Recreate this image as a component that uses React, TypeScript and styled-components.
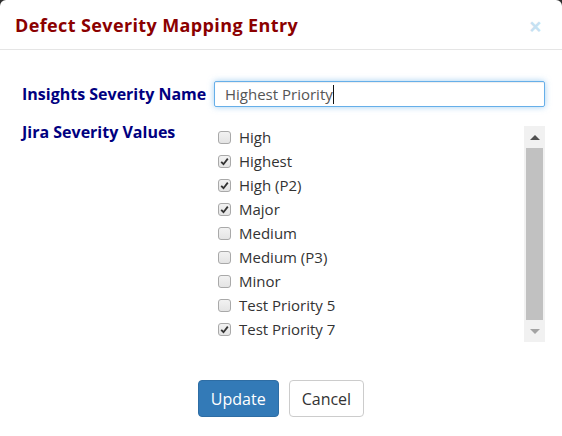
import React from "react";
import styled, { createGlobalStyle } from "styled-components";

const Global = createGlobalStyle`
  html, body { margin: 0; padding: 0; background: #2e2e2e; }
  body { font-family: "Open Sans", "Liberation Sans", sans-serif; }
  * { box-sizing: border-box; }
`;

const Dialog = styled.div`
  width: 562px;
  height: 436px;
  background: #fff;
  border-radius: 6px 6px 0 0;
  display: flex;
  flex-direction: column;
  overflow: hidden;
`;

const Header = styled.div`
  height: 50px;
  border-bottom: 1px solid #e5e5e5;
  display: flex;
  align-items: center;
  justify-content: space-between;
  padding: 0 20px 0 15px;
`;

const Title = styled.h4`
  margin: 0;
  font-size: 18px;
  font-weight: 700;
  letter-spacing: 0.38px;
  color: #8b0000;
`;

const Close = styled.button`
  border: 0;
  background: none;
  padding: 0;
  margin-top: 3px;
  font-family: "Open Sans", "Liberation Sans", sans-serif;
  font-size: 23px;
  font-weight: 700;
  line-height: 1;
  color: #c6e1f2;
  cursor: pointer;
`;

const Body = styled.div`
  display: grid;
  grid-template-columns: 192px 1fr;
  row-gap: 19px;
  padding: 31px 17px 0 22px;
  align-items: start;
`;

const Label = styled.label<{ $top?: number }>`
  font-size: 16px;
  font-weight: 700;
  color: #000080;
  line-height: 26px;
  white-space: nowrap;
  margin-top: ${(p) => p.$top ?? 0}px;
`;

const InputBox = styled.div`
  height: 26px;
  border: 1px solid #66afe9;
  border-radius: 2px;
  box-shadow: inset 0 1px 1px rgba(0, 0, 0, 0.075), 0 0 6px rgba(102, 175, 233, 0.6);
  padding: 0 10px;
  font-size: 15px;
  line-height: 24px;
  color: #555;
  display: flex;
  align-items: center;
`;

const Caret = styled.span`
  display: inline-block;
  width: 1px;
  height: 19px;
  background: #111;
`;

const ListBox = styled.div`
  display: flex;
  height: 216px;
`;

const Options = styled.div`
  flex: 1;
  display: flex;
  flex-direction: column;
  padding-left: 4px;
  margin-top: -1px;
`;

const Option = styled.label`
  display: flex;
  align-items: center;
  gap: 8px;
  height: 24px;
  font-size: 15px;
  color: #333;
`;

const Box = styled.span`
  width: 13px;
  height: 13px;
  border: 1px solid #a9a9a9;
  border-radius: 3px;
  background: linear-gradient(#f2f2f2, #e4e4e4);
  display: flex;
  align-items: center;
  justify-content: center;
  flex: none;
`;

const Scrollbar = styled.div`
  width: 21px;
  background: #f1f1f1;
  display: flex;
  flex-direction: column;
  align-items: center;
`;

const Arrow = styled.div<{ $dir: "up" | "down"; $color: string }>`
  height: 22px;
  width: 100%;
  display: flex;
  align-items: center;
  justify-content: center;
  flex: none;
  &::before {
    content: "";
    border-left: 5px solid transparent;
    border-right: 5px solid transparent;
    ${(p) =>
      p.$dir === "up"
        ? `border-bottom: 5px solid ${p.$color};`
        : `border-top: 5px solid ${p.$color};`}
  }
`;

const Thumb = styled.div`
  width: 17px;
  flex: 1;
  background: #c1c1c1;
`;

const Footer = styled.div`
  display: flex;
  justify-content: center;
  gap: 10px;
  padding-top: 38px;
`;

const Button = styled.button<{ $primary?: boolean }>`
  height: 37px;
  padding: 0 12px;
  font-family: "Open Sans", "Liberation Sans", sans-serif;
  font-size: 16px;
  border-radius: 4px;
  border: 1px solid ${(p) => (p.$primary ? "#2e6da4" : "#ccc")};
  background: ${(p) => (p.$primary ? "#337ab7" : "#fff")};
  color: ${(p) => (p.$primary ? "#fff" : "#333")};
  cursor: pointer;
`;

const items: [string, boolean][] = [
  ["High", false],
  ["Highest", true],
  ["High (P2)", true],
  ["Major", true],
  ["Medium", false],
  ["Medium (P3)", false],
  ["Minor", false],
  ["Test Priority 5", false],
  ["Test Priority 7", true],
];

const Check = () => (
  <svg width="9" height="9" viewBox="0 0 9 9">
    <path d="M1.2 4.8 L3.5 7.2 L7.8 1.6" fill="none" stroke="#333" strokeWidth="1.8" />
  </svg>
);

export default function App() {
  return (
    <>
      <Global />
      <Dialog>
        <Header>
          <Title>Defect Severity Mapping Entry</Title>
          <Close aria-label="Close">×</Close>
        </Header>
        <Body>
          <Label>Insights Severity Name</Label>
          <InputBox>
            Highest Priority
            <Caret />
          </InputBox>
          <Label $top={-7}>Jira Severity Values</Label>
          <ListBox>
            <Options>
              {items.map(([name, checked]) => (
                <Option key={name}>
                  <Box>{checked && <Check />}</Box>
                  {name}
                </Option>
              ))}
            </Options>
            <Scrollbar>
              <Arrow $dir="up" $color="#505050" />
              <Thumb />
              <Arrow $dir="down" $color="#a3a3a3" />
            </Scrollbar>
          </ListBox>
        </Body>
        <Footer>
          <Button $primary>Update</Button>
          <Button>Cancel</Button>
        </Footer>
      </Dialog>
    </>
  );
}
